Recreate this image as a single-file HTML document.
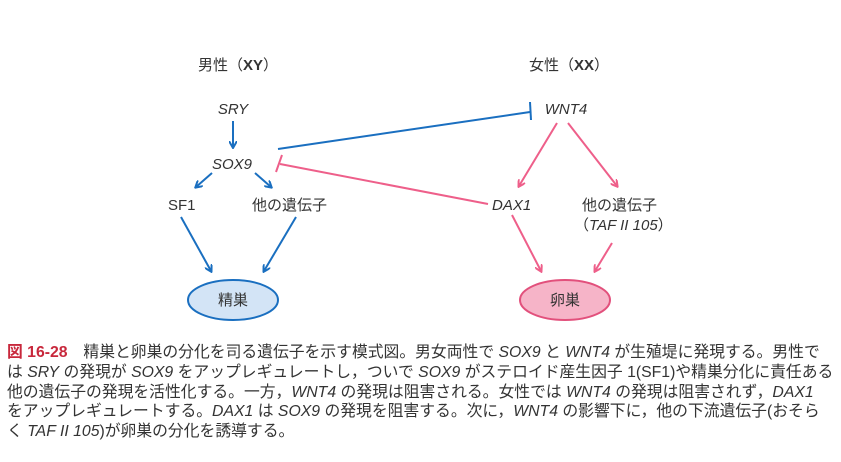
<!DOCTYPE html>
<html><head><meta charset="utf-8"><style>
body{margin:0;width:841px;height:462px;background:#fff;overflow:hidden;font-family:"Liberation Sans","Noto Sans CJK JP",sans-serif;color:#333}
svg{position:absolute;left:0;top:0}
svg text{font-family:"Liberation Sans","Noto Sans CJK JP",sans-serif;font-size:15px;fill:#333}
.i{font-style:italic}
.cap{position:absolute;left:7px;top:343px;font-size:15.8px;line-height:19.8px;white-space:nowrap}
.cap div{height:19.8px}
.cap i{font-style:italic}
.r{color:#c8283c;font-weight:bold}
</style></head><body>
<svg width="841" height="330">
<defs>
<marker id="ab" markerWidth="8" markerHeight="8" refX="6" refY="4" orient="auto" markerUnits="userSpaceOnUse"><path d="M0,0 L7,4 L0,8" fill="none" stroke="#1a6fc0" stroke-width="2"/></marker>
<marker id="ap" markerWidth="8" markerHeight="8" refX="6" refY="4" orient="auto" markerUnits="userSpaceOnUse"><path d="M0,0 L7,4 L0,8" fill="none" stroke="#ee5f8a" stroke-width="2"/></marker>
</defs>
<text x="198" y="70">男性（<tspan font-weight="bold">XY</tspan>）</text>
<text x="529" y="70">女性（<tspan font-weight="bold">XX</tspan>）</text>
<text x="233" y="114" text-anchor="middle" class="i">SRY</text>
<text x="232" y="169" text-anchor="middle" class="i">SOX9</text>
<text x="566" y="114" text-anchor="middle" class="i">WNT4</text>
<text x="168" y="210">SF1</text>
<text x="252" y="210">他の遺伝子</text>
<text x="492" y="210" class="i">DAX1</text>
<text x="582" y="210">他の遺伝子</text>
<text x="574" y="230">（<tspan class="i">TAF II 105</tspan>）</text>
<g stroke="#1a6fc0" stroke-width="2" fill="none">
<line x1="233" y1="121" x2="233" y2="147" marker-end="url(#ab)"/>
<line x1="212" y1="173" x2="196" y2="187" marker-end="url(#ab)"/>
<line x1="255" y1="173" x2="271" y2="187" marker-end="url(#ab)"/>
<line x1="181" y1="217" x2="211" y2="271" marker-end="url(#ab)"/>
<line x1="296" y1="217" x2="264" y2="271" marker-end="url(#ab)"/>
<line x1="278" y1="149" x2="530" y2="112"/>
<line x1="530" y1="102" x2="531" y2="120"/>
</g>
<g stroke="#ee5f8a" stroke-width="2" fill="none">
<line x1="557" y1="123" x2="519" y2="186" marker-end="url(#ap)"/>
<line x1="568" y1="123" x2="617" y2="186" marker-end="url(#ap)"/>
<line x1="512" y1="215" x2="541" y2="271" marker-end="url(#ap)"/>
<line x1="612" y1="243" x2="595" y2="271" marker-end="url(#ap)"/>
<line x1="488" y1="204" x2="280" y2="164"/>
<line x1="282" y1="155" x2="276" y2="172"/>
</g>
<ellipse cx="233" cy="300" rx="45" ry="20" fill="#d3e4f6" stroke="#1a6fc0" stroke-width="2"/>
<ellipse cx="565" cy="300" rx="45" ry="20" fill="#f6b4c8" stroke="#e2507c" stroke-width="2"/>
<text x="233" y="305" text-anchor="middle">精巣</text>
<text x="565" y="305" text-anchor="middle">卵巣</text>
</svg>
<div class="cap">
<div><span class="r">図 16-28</span>　精巣と卵巣の分化を司る遺伝子を示す模式図。男女両性で <i>SOX9</i> と <i>WNT4</i> が生殖堤に発現する。男性で</div>
<div>は <i>SRY</i> の発現が <i>SOX9</i> をアップレギュレートし，ついで <i>SOX9</i> がステロイド産生因子 1(SF1)や精巣分化に責任ある</div>
<div>他の遺伝子の発現を活性化する。一方，<i>WNT4</i> の発現は阻害される。女性では <i>WNT4</i> の発現は阻害されず，<i>DAX1</i></div>
<div>をアップレギュレートする。<i>DAX1</i> は <i>SOX9</i> の発現を阻害する。次に，<i>WNT4</i> の影響下に，他の下流遺伝子(おそら</div>
<div>く <i>TAF II 105</i>)が卵巣の分化を誘導する。</div>
</div>
</body></html>
